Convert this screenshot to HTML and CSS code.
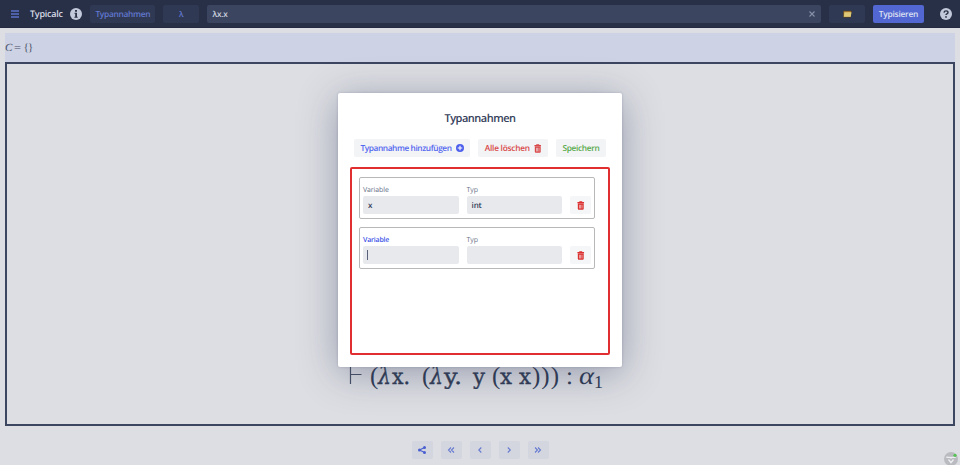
FILE: index.html
```html
<!DOCTYPE html>
<html lang="de">
<head>
<meta charset="utf-8">
<title>Typicalc</title>
<link rel="stylesheet" href="styles.css">
</head>
<body>
<svg width="0" height="0" class="defs">
  <symbol id="trash" viewBox="0 0 8 10"><path fill="currentColor" fill-rule="evenodd" d="M.2 1.200H2.200V.9Q2.200.3 2.800.3H5.200Q5.800.3 5.800.9V1.200H7.800V2.500H.2ZM.7 2.800H7.300V8.600Q7.300 9.800 6.200 9.800H1.800Q.7 9.800.7 8.600ZM2.300 4.300V8.200H2.900V4.300ZM3.700 4.300V8.200H4.300V4.300ZM5.100 4.300V8.200H5.700V4.300Z"/></symbol>
</svg>
<header class="topbar">
  <svg class="menu" viewBox="0 0 8 8"><path d="M0 1h8M0 4h8M0 7h8" stroke="#5b70c6" stroke-width="1.4"/></svg>
  <h1>Typicalc</h1>
  <svg class="round info" viewBox="0 0 12 12"><circle cx="6" cy="6" r="6" fill="#c2c9da"/><path d="M5 2h2v1.700H5zM4.500 4.800H7v4h.7v1H4.400v-1h.8v-3h-.7z" fill="#2a3147"/></svg>
  <button class="dark types">Typannahmen</button>
  <button class="dark lambda">λ</button>
  <div class="term"><span>λx.x</span><svg viewBox="0 0 6 6"><path d="M.5.5l5 5M5.500.5l-5 5" stroke="#8791a9" stroke-width="1.100"/></svg></div>
  <button class="dark folder"><svg viewBox="0 0 8 7"><path d="M.3.6h7.200l.3 1-1 4.900H.3z" fill="#58451c"/><path d="M.7 1.200h6.300V6H.7z" fill="#c6913c"/><path d="M1.400 2h6.200L6.800 6H.7z" fill="#dcc878"/></svg></button>
  <button class="primary">Typisieren</button>
  <svg class="round help" viewBox="0 0 12 12"><circle cx="6" cy="6" r="6" fill="#c2c9da"/><path d="M4 4.600Q4.200 2.900 6 2.900Q8 2.900 8 4.400Q8 5.300 6.900 5.800Q6 6.200 6 7.100" fill="none" stroke="#2a3147" stroke-width="1.400"/><circle cx="6" cy="8.900" r=".9" fill="#2a3147"/></svg>
</header>
<main>
  <div class="constraints"><svg width="40" height="20"><text x="0" y="13" font-style="italic" textLength="7">C</text><text x="9" y="13" textLength="7" lengthAdjust="spacingAndGlyphs">=</text><text x="18.500" y="13">{</text><text x="23" y="13">}</text></svg></div>
  <div class="canvas">
    <svg class="formula" width="264" height="44">
      <path d="M4.500 7v20M4.500 17.500h11" stroke="#485068" stroke-width="1.200"/>
      <text x="24" y="27">(</text><text x="32" y="27" class="lam" textLength="13" lengthAdjust="spacingAndGlyphs">λ</text><text x="46" y="27" class="tt" textLength="18" lengthAdjust="spacingAndGlyphs">x.</text>
      <text x="76" y="27">(</text><text x="84" y="27" class="lam" textLength="13" lengthAdjust="spacingAndGlyphs">λ</text><text x="98" y="27" class="tt" textLength="18" lengthAdjust="spacingAndGlyphs">y.</text>
      <text x="127" y="27" class="tt" textLength="12" lengthAdjust="spacingAndGlyphs">y</text><text x="146" y="27">(</text><text x="154" y="27" class="tt" textLength="12" lengthAdjust="spacingAndGlyphs">x</text><text x="173" y="27" class="tt" textLength="12" lengthAdjust="spacingAndGlyphs">x</text>
      <text x="186" y="27" textLength="27">)))</text><text x="220" y="27">:</text><text x="233" y="27" class="alpha" textLength="15" lengthAdjust="spacingAndGlyphs">α</text><text x="248" y="31" class="sub">1</text>
    </svg>
  </div>
  <nav class="steps">
    <button><svg class="share" viewBox="0 0 8 8"><path d="M6.500 1.500L1.500 4l5 2.500" fill="none" stroke="#4a5fd0"/><g fill="#4a5fd0"><circle cx="6.500" cy="1.500" r="1.500"/><circle cx="1.500" cy="4" r="1.500"/><circle cx="6.500" cy="6.500" r="1.500"/></g></svg></button>
    <button><svg viewBox="0 0 8 8"><path d="M4 1.500L1.500 4L4 6.500M7 1.500L4.500 4L7 6.500"/></svg></button>
    <button><svg viewBox="0 0 8 8"><path d="M5.300 1.500L2.800 4l2.500 2.500"/></svg></button>
    <button><svg viewBox="0 0 8 8"><path d="M2.800 1.500L5.300 4L2.800 6.500"/></svg></button>
    <button><svg viewBox="0 0 8 8"><path d="M1 1.500L3.500 4L1 6.500M4 1.500L6.500 4L4 6.500"/></svg></button>
  </nav>
</main>
<svg class="devtools" viewBox="0 0 14 14"><circle cx="7" cy="7" r="7" fill="#b9bbc0"/><path d="M3 4.500v.8h3.300L7 6l.7-.7H11v-.8M4.500 7.500L7 10.700l2.500-3.200" fill="none" stroke="#eceef1" stroke-width="1.300"/><circle cx="11" cy="3.300" r="1.600" fill="#55c454"/></svg>
<section class="dialog">
  <h2>Typannahmen</h2>
  <div class="actions">
    <button class="add"><span>Typannahme hinzufügen</span><svg viewBox="0 0 8 8"><circle cx="4" cy="4" r="4" fill="#4c5eed"/><path d="M4 1.700v4.600M1.700 4h4.600" stroke="#fff" stroke-width="1.100"/></svg></button>
    <button class="clear"><span>Alle löschen</span><svg viewBox="0 0 8 10"><use href="#trash"/></svg></button>
    <button class="save"><span>Speichern</span></button>
  </div>
  <div class="list">
    <div class="entry">
      <label>Variable<span class="field">x</span></label>
      <label>Typ<span class="field">int</span></label>
      <button class="delete"><svg viewBox="0 0 8 10"><use href="#trash"/></svg></button>
    </div>
    <div class="entry">
      <label class="focused">Variable<span class="field"><i class="caret"></i></span></label>
      <label>Typ<span class="field"></span></label>
      <button class="delete"><svg viewBox="0 0 8 10"><use href="#trash"/></svg></button>
    </div>
  </div>
</section>
</body>
</html>
```
FILE: styles.css
```css
* { box-sizing: border-box; }
body { margin: 0; height: 465px; overflow: hidden; background: #dddee3; font-family: "Open Sans", "Noto Sans", sans-serif; font-size: 7.5px; color: #303b54; text-rendering: geometricPrecision; }
h1, h2 { margin: 0; font-weight: 600; }
button { border: 0; padding: 0; border-radius: 2px; font: 600 8px "Open Sans", "Noto Sans", sans-serif; display: flex; align-items: center; justify-content: center; flex: none; height: 18px; text-rendering: geometricPrecision; }
svg { display: block; flex: none; }
.defs { position: absolute; }
.topbar { height: 28px; background: #283048; display: flex; align-items: center; padding: 0 8px 0 11px; border-bottom: 1px solid #242b40; }
.menu { width: 8px; height: 8px; }
h1 { font-size: 9px; width: 33px; margin-left: 11px; color: #d7dbe4; letter-spacing: -.25px; white-space: nowrap; }
.round { width: 12px; height: 12px; }
.info { margin-left: 7.400px; }
.dark { background: #303953; color: #6078d0; }
.types { width: 65px; margin-left: 8px; letter-spacing: -.3px; font-size: 8.400px; }
.types, .lambda, .primary { padding-top: 1px; }
.lambda { width: 36px; margin-left: 8px; }
.term { flex: 1; height: 18px; margin-left: 8px; padding: 0 6px 0 5px; border-radius: 2px; background: #3b455f; color: #d2d7e1; display: flex; align-items: center; justify-content: space-between; font-weight: 600; font-size: 8.200px; letter-spacing: -.2px; }
.term span { padding-top: 1px; }
.term svg { width: 6px; height: 6px; }
.folder { width: 36px; margin-left: 8px; }
.folder svg { width: 9px; height: 8px; }
.primary { width: 51px; margin-left: 8px; background: #5267d1; color: #dce0f3; letter-spacing: -.25px; font-size: 8.400px; }
.help { margin-left: 16px; }
main { padding: 5px 5px 0; }
.constraints { height: 29px; padding-top: 5px; background: #cdd3e4; font: 11px "Liberation Serif", serif; }
.constraints text { fill: #485068; }
.canvas { height: 364px; border: 2px solid #3d4660; display: flex; justify-content: center; align-items: flex-end; padding: 0 5px 23px 0; }
.formula text { font: 25px "Liberation Serif", serif; fill: #303b54; }
.formula .lam { font: italic 24px "DejaVu Serif", serif; stroke: #303b54; stroke-width: .3px; }
.formula .tt { font: 22px "DejaVu Serif", serif; stroke: #303b54; stroke-width: .4px; }
.formula .alpha { font: italic 25px "Liberation Serif", serif; }
.formula .sub { font-size: 18px; }
.steps { display: flex; justify-content: center; gap: 8px; padding-top: 14.500px; }
.steps button { width: 21px; background: #d3d6df; }
.steps svg { width: 8px; height: 8px; fill: none; stroke: #6579d0; stroke-width: 1.100; }
.steps .share { stroke: none; }
.devtools { position: absolute; left: 944px; top: 452px; width: 14px; height: 14px; }
.dialog { position: absolute; left: 338px; top: 93px; width: 284px; height: 274px; padding: 17px 12px 12px; border-radius: 2px; background: #fff; box-shadow: 0 0 3px rgba(40,50,80,.2), 0 6px 38px rgba(50,62,95,.42); }
h2 { font-size: 11px; line-height: 16px; padding-top: 1px; text-align: center; color: #35405a; letter-spacing: -.5px; }
.actions { display: flex; justify-content: center; gap: 8px; margin: 12px 0 10px; }
.actions button { background: #f3f4f6; gap: 4px; letter-spacing: -.4px; font-size: 8.300px; }
.actions span { white-space: nowrap; padding-top: 1px; }
.actions .add { width: 116px; color: #5368f0; }
.actions .clear { width: 70px; color: #d94949; gap: 4px; letter-spacing: -.25px; }
.actions .save { width: 50px; color: #59aa4b; letter-spacing: -.3px; }
.add svg { width: 8px; height: 8px; }
.clear svg, .delete svg { width: 7.500px; height: 9px; }
.list { height: 188px; border: 2px solid #e12e30; border-radius: 2px; padding: 8px 7px; }
.entry { width: 236px; height: 42px; margin-bottom: 8px; border: 1px solid #b8b8bb; border-radius: 2px; padding: 6px 3px 0; display: flex; align-items: flex-start; gap: 8px; }
label { width: 96px; font-size: 7px; line-height: 14px; color: #69738a; letter-spacing: -.1px; }
.focused { color: #4054e8; font-weight: 600; letter-spacing: -.2px; }
.field { display: flex; align-items: center; height: 18px; margin-top: -2px; padding: 1px 0 0 5px; border-radius: 2px; background: #e8e9ed; color: #35405a; font-size: 8px; font-weight: 600; }
.caret { width: 1px; height: 10px; margin: -1px 0 0 -1px; background: #59627a; }
.delete { width: 21px; margin-top: 12px; padding-left: 1px; background: #f5f6f8; color: #dc3030; }
```
